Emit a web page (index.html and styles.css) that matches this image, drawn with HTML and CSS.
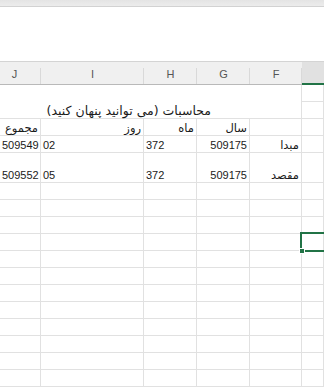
FILE: index.html
```html
<!DOCTYPE html>
<html lang="fa">
<head>
  <meta charset="utf-8">
  <title>محاسبات</title>
  <link rel="stylesheet" href="styles.css">
</head>
<body>
  <div class="topbar"></div>
  <div class="formula"></div>

  <div class="sheet">
    <div class="hd hd-j">J</div>
    <div class="hd">I</div>
    <div class="hd">H</div>
    <div class="hd">G</div>
    <div class="hd">F</div>
    <div class="hd hd-sel"></div>

    <!-- row 1 -->
    <div class="c blank"></div>
    <div class="c blank"></div>
    <div class="c blank"></div>
    <div class="c blank"></div>
    <div class="c blank-f"></div>
    <div class="c"></div>

    <!-- row 2 -->
    <div class="c title">محاسبات (می توانید پنهان کنید)</div>
    <div class="c blank-f"></div>
    <div class="c"></div>

    <!-- row 3 -->
    <div class="c r fa">مجموع</div>
    <div class="c r fa">روز</div>
    <div class="c r fa">ماه</div>
    <div class="c r fa">سال</div>
    <div class="c"></div>
    <div class="c"></div>

    <!-- row 4 -->
    <div class="c r">509549</div>
    <div class="c">02</div>
    <div class="c">372</div>
    <div class="c r">509175</div>
    <div class="c r fa">مبدا</div>
    <div class="c"></div>

    <!-- row 5 -->
    <div class="c r tall">509552</div>
    <div class="c tall">05</div>
    <div class="c tall">372</div>
    <div class="c r tall">509175</div>
    <div class="c r fa tall">مقصد</div>
    <div class="c tall"></div>

    <div class="c"></div><div class="c"></div><div class="c"></div><div class="c"></div><div class="c"></div><div class="c"></div>
    <div class="c"></div><div class="c"></div><div class="c"></div><div class="c"></div><div class="c"></div><div class="c"></div>
    <div class="c"></div><div class="c"></div><div class="c"></div><div class="c"></div><div class="c"></div><div class="c"></div>
    <div class="c"></div><div class="c"></div><div class="c"></div><div class="c"></div><div class="c"></div><div class="c sel"><span class="handle"></span></div>
    <div class="c"></div><div class="c"></div><div class="c"></div><div class="c"></div><div class="c"></div><div class="c"></div>
    <div class="c"></div><div class="c"></div><div class="c"></div><div class="c"></div><div class="c"></div><div class="c"></div>
    <div class="c"></div><div class="c"></div><div class="c"></div><div class="c"></div><div class="c"></div><div class="c"></div>
    <div class="c"></div><div class="c"></div><div class="c"></div><div class="c"></div><div class="c"></div><div class="c"></div>
    <div class="c"></div><div class="c"></div><div class="c"></div><div class="c"></div><div class="c"></div><div class="c"></div>
    <div class="c"></div><div class="c"></div><div class="c"></div><div class="c"></div><div class="c"></div><div class="c"></div>
    <div class="c"></div><div class="c"></div><div class="c"></div><div class="c"></div><div class="c"></div><div class="c"></div>
    <div class="c"></div><div class="c"></div><div class="c"></div><div class="c"></div><div class="c"></div><div class="c"></div>
  </div>
</body>
</html>
```

FILE: styles.css
```css
body {
  margin: 0;
  background: #fff;
  font-family: "Liberation Sans", "DejaVu Sans", sans-serif;
  font-size: 11px;
  color: #1a1a1a;
  overflow: hidden;
}

.topbar {
  height: 6px;
  background: linear-gradient(#e4e4e4, #ececec);
  border-bottom: 1px solid #d2d2d2;
}

.formula {
  height: 54px;
  background: #fff;
}

.sheet {
  display: grid;
  grid-template-columns: 41px 103px 53px 53px 52px 1fr;
}

.hd {
  box-sizing: border-box;
  height: 24px;
  padding-top: 6px;
  border-top: 1px solid #d4d4d4;
  border-bottom: 1px solid #b9b9b9;
  background: linear-gradient(#d9d9d9, #d9d9d9) right bottom / 1px 16px no-repeat, #f0f0f0;
  text-align: center;
  color: #555;
  font-size: 11px;
}

.hd-j {
  padding-right: 12px;
}

.hd-sel {
  background: #e1e1e1;
  border-bottom: 2px solid #217346;
}

.c {
  box-sizing: border-box;
  height: 17px;
  border-right: 1px solid #e1e1e1;
  border-bottom: 1px solid #e1e1e1;
  padding: 3px 2px 0;
  white-space: nowrap;
  line-height: 12px;
}

.c.r {
  text-align: right;
}

.c.fa {
  font-family: "DejaVu Sans", sans-serif;
  font-size: 11.5px;
}

.c.blank {
  border: none;
}

.c.blank-f {
  border-bottom: none;
}

.c.title {
  grid-column: 1 / 5;
  border-right: none;
  border-bottom: 1px solid #e1e1e1;
  padding-right: 39px;
  text-align: right;
  direction: rtl;
  font-family: "DejaVu Sans", sans-serif;
  font-size: 12.5px;
}

.c.title + .blank-f {
  border-bottom: 1px solid #e1e1e1;
}

.c.tall {
  height: 30px;
  padding-top: 16px;
}

.c.sel {
  position: relative;
}

.c.sel::before {
  content: "";
  position: absolute;
  left: -2px;
  top: -2px;
  right: -4px;
  bottom: -2px;
  border: 2px solid #217346;
}

.handle {
  position: absolute;
  left: -3px;
  bottom: -4px;
  width: 4px;
  height: 4px;
  background: #217346;
  border: 1px solid #fff;
}
```
